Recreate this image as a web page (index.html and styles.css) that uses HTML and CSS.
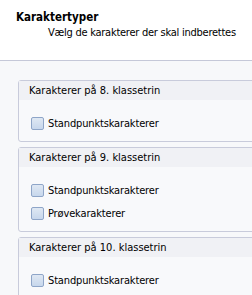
FILE: index.html
```html
<!DOCTYPE html>
<html lang="da">
<head>
<meta charset="UTF-8">
<meta name="viewport" content="width=device-width, initial-scale=1.0">
<title>Karaktertyper</title>
<link rel="stylesheet" href="styles.css">
</head>
<body>
<div class="header">
    <h1>Karaktertyper</h1>
    <p class="subtitle">Vælg de karakterer der skal indberettes</p>
</div>
<div class="content">
    <div class="group">
        <div class="group-title">Karakterer på 8. klassetrin</div>
        <div class="group-body">
            <label class="option"><span class="box"></span>Standpunktskarakterer</label>
        </div>
    </div>
    <div class="group">
        <div class="group-title">Karakterer på 9. klassetrin</div>
        <div class="group-body">
            <label class="option"><span class="box"></span>Standpunktskarakterer</label>
            <label class="option"><span class="box"></span>Prøvekarakterer</label>
        </div>
    </div>
    <div class="group">
        <div class="group-title">Karakterer på 10. klassetrin</div>
        <div class="group-body">
            <label class="option"><span class="box"></span>Standpunktskarakterer</label>
        </div>
    </div>
</div>
</body>
</html>
```

FILE: styles.css
```css
body {
    margin: 0;
    font-family: "DejaVu Sans Condensed", "DejaVu Sans", sans-serif;
    font-size: 11px;
    color: #000;
    background: #f7f8fa;
    overflow: hidden;
}
.header {
    background: #fff;
    height: 61px;
    border-bottom: 1px solid #c5c8d8;
    padding: 11px 0 0 16px;
    box-sizing: border-box;
}
.header h1 {
    margin: 0;
    font-size: 11.5px;
    line-height: 13px;
    font-weight: bold;
}
.subtitle {
    margin: 3px 0 0 32px;
    line-height: 12px;
    letter-spacing: -0.25px;
}
.content {
    padding: 19px 0 0 18px;
}
.group {
    width: 260px;
    border: 1px solid #c8cbdb;
    border-radius: 3px;
    background: #f8f9fb;
    margin-bottom: 5px;
}
.group-title {
    background: #f0f1f5;
    height: 19px;
    line-height: 19px;
    padding-left: 10px;
}
.group-body {
    padding: 12px 0 6px 12px;
}
.option {
    display: flex;
    align-items: center;
    height: 23px;
    letter-spacing: -0.15px;
}
.box {
    width: 11px;
    height: 11px;
    border: 1px solid #8ea5c8;
    border-radius: 2px;
    background: linear-gradient(#dfe8f3, #c7d7ec);
    margin-right: 4px;
}
```
